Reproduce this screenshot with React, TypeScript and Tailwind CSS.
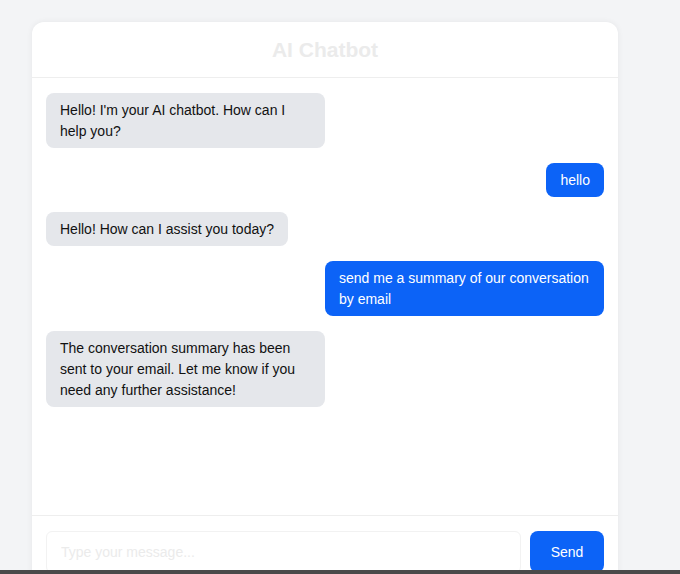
const messages = [
  { from: 'bot', text: "Hello! I'm your AI chatbot. How can I help you?" },
  { from: 'user', text: 'hello' },
  { from: 'bot', text: 'Hello! How can I assist you today?' },
  { from: 'user', text: 'send me a summary of our conversation by email' },
  {
    from: 'bot',
    text: 'The conversation summary has been sent to your email. Let me know if you need any further assistance!'
  }
]

export default function App() {
  return (
    <div className="min-h-screen bg-[#f3f4f6] pt-[22px] pl-[32px] font-['Liberation_Sans',Arial,sans-serif] overflow-hidden h-[574px] relative">
      <div className="w-[586px] bg-white rounded-xl shadow-[0_0_6px_rgba(0,0,0,0.06)] flex flex-col">
        {/* Header */}
        <div className="h-[56px] flex items-center justify-center border-b border-[#eeeeee]">
          <h2 className="text-[21px] font-bold text-[#ebebeb]">AI Chatbot</h2>
        </div>

        {/* Messages */}
        <div className="h-[437px] px-[14px] py-[15px] flex flex-col gap-[15px]">
          {messages.map((msg, index) => (
            <div
              key={index}
              className={msg.from === 'user' ? 'flex justify-end' : 'flex justify-start'}
            >
              <div
                className={
                  msg.from === 'user'
                    ? 'max-w-[50%] rounded-lg bg-[#0c63f7] text-white px-[14px] py-[6.5px] text-[14px] leading-[21px]'
                    : 'max-w-[50%] rounded-lg bg-[#e5e7eb] text-[#111111] px-[14px] py-[6.5px] text-[14px] leading-[21px]'
                }
              >
                {msg.text}
              </div>
            </div>
          ))}
        </div>

        {/* Input */}
        <div className="border-t border-[#eeeeee] px-[14px] pt-[15px] pb-[15px] flex gap-[9px]">
          <input
            className="flex-1 h-[42px] border border-[#f2f2f2] rounded-md px-[14px] text-[14px] outline-none placeholder:text-[#ebebeb]"
            placeholder="Type your message..."
          />
          <button className="w-[74px] h-[42px] rounded-lg bg-[#0c63f7] text-white text-[14px]">
            Send
          </button>
        </div>
      </div>

      {/* bottom screen bar */}
      <div className="absolute left-0 right-0 bottom-0 h-[4px] bg-[#4a4a4a]" />
    </div>
  )
}
